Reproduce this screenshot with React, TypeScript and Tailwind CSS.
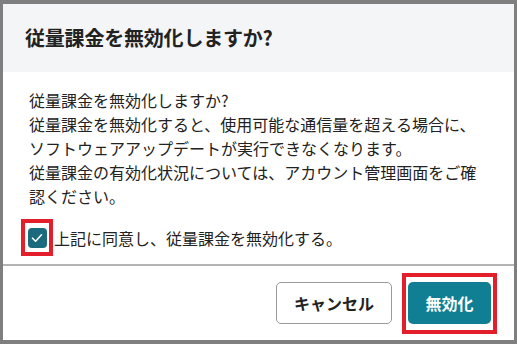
export default function App() {
  return (
    <div
      className="w-[517px] h-[344px] bg-[#7f7f7f] pt-[4px] pl-[3px] overflow-hidden"
      style={{ fontFamily: '"Noto Sans CJK JP", "Noto Sans", sans-serif' }}
    >
      <div className="w-[511px] h-[336px] bg-white flex flex-col">
        <div className="h-[68px] bg-[#f4f5f6] px-[22px] flex items-center">
          <h2 className="text-[20px] font-bold text-[#222] tracking-[-0.2px]">従量課金を無効化しますか?</h2>
        </div>

        <div className="pt-[16px] px-[26px] text-[16px] leading-[24px] text-[#222]">
          <p>従量課金を無効化しますか?</p>
          <p>従量課金を無効化すると、使用可能な通信量を超える場合に、ソフトウェアアップデートが実行できなくなります。</p>
          <p>従量課金の有効化状況については、アカウント管理画面をご確認ください。</p>

          <label className="mt-[11px] -ml-[8px] flex items-center">
            <span className="w-[32px] h-[37px] border-4 border-[#e21f2b] flex items-center justify-center">
              <span className="w-[19px] h-[20px] rounded-[4px] bg-[#1b6a7e] flex items-center justify-center">
                <svg width="12" height="10" viewBox="0 0 12 10" fill="none">
                  <path d="M1.5 5.2 L4.6 8.2 L10.5 1.8" stroke="white" strokeWidth="1.6" strokeLinecap="round" strokeLinejoin="round" />
                </svg>
              </span>
            </span>
            <span className="ml-[1px]">上記に同意し、従量課金を無効化する。</span>
          </label>
        </div>

        <div className="mt-[8px] h-[2px] bg-[#b4b4b4]" />

        <div className="flex-1 flex items-center justify-end pr-[17px]">
          <button className="h-[42px] px-[17px] rounded-[5px] border border-[#9a9a9a] bg-white text-[16px] font-bold text-[#222]">
            キャンセル
          </button>
          <span className="ml-[10px] h-[61px] w-[95px] border-4 border-[#e21f2b] flex items-center justify-center">
            <button className="h-[42px] w-[83px] rounded-[5px] bg-[#117f93] text-[16px] font-bold text-white">
              無効化
            </button>
          </span>
        </div>
      </div>
    </div>
  );
}
